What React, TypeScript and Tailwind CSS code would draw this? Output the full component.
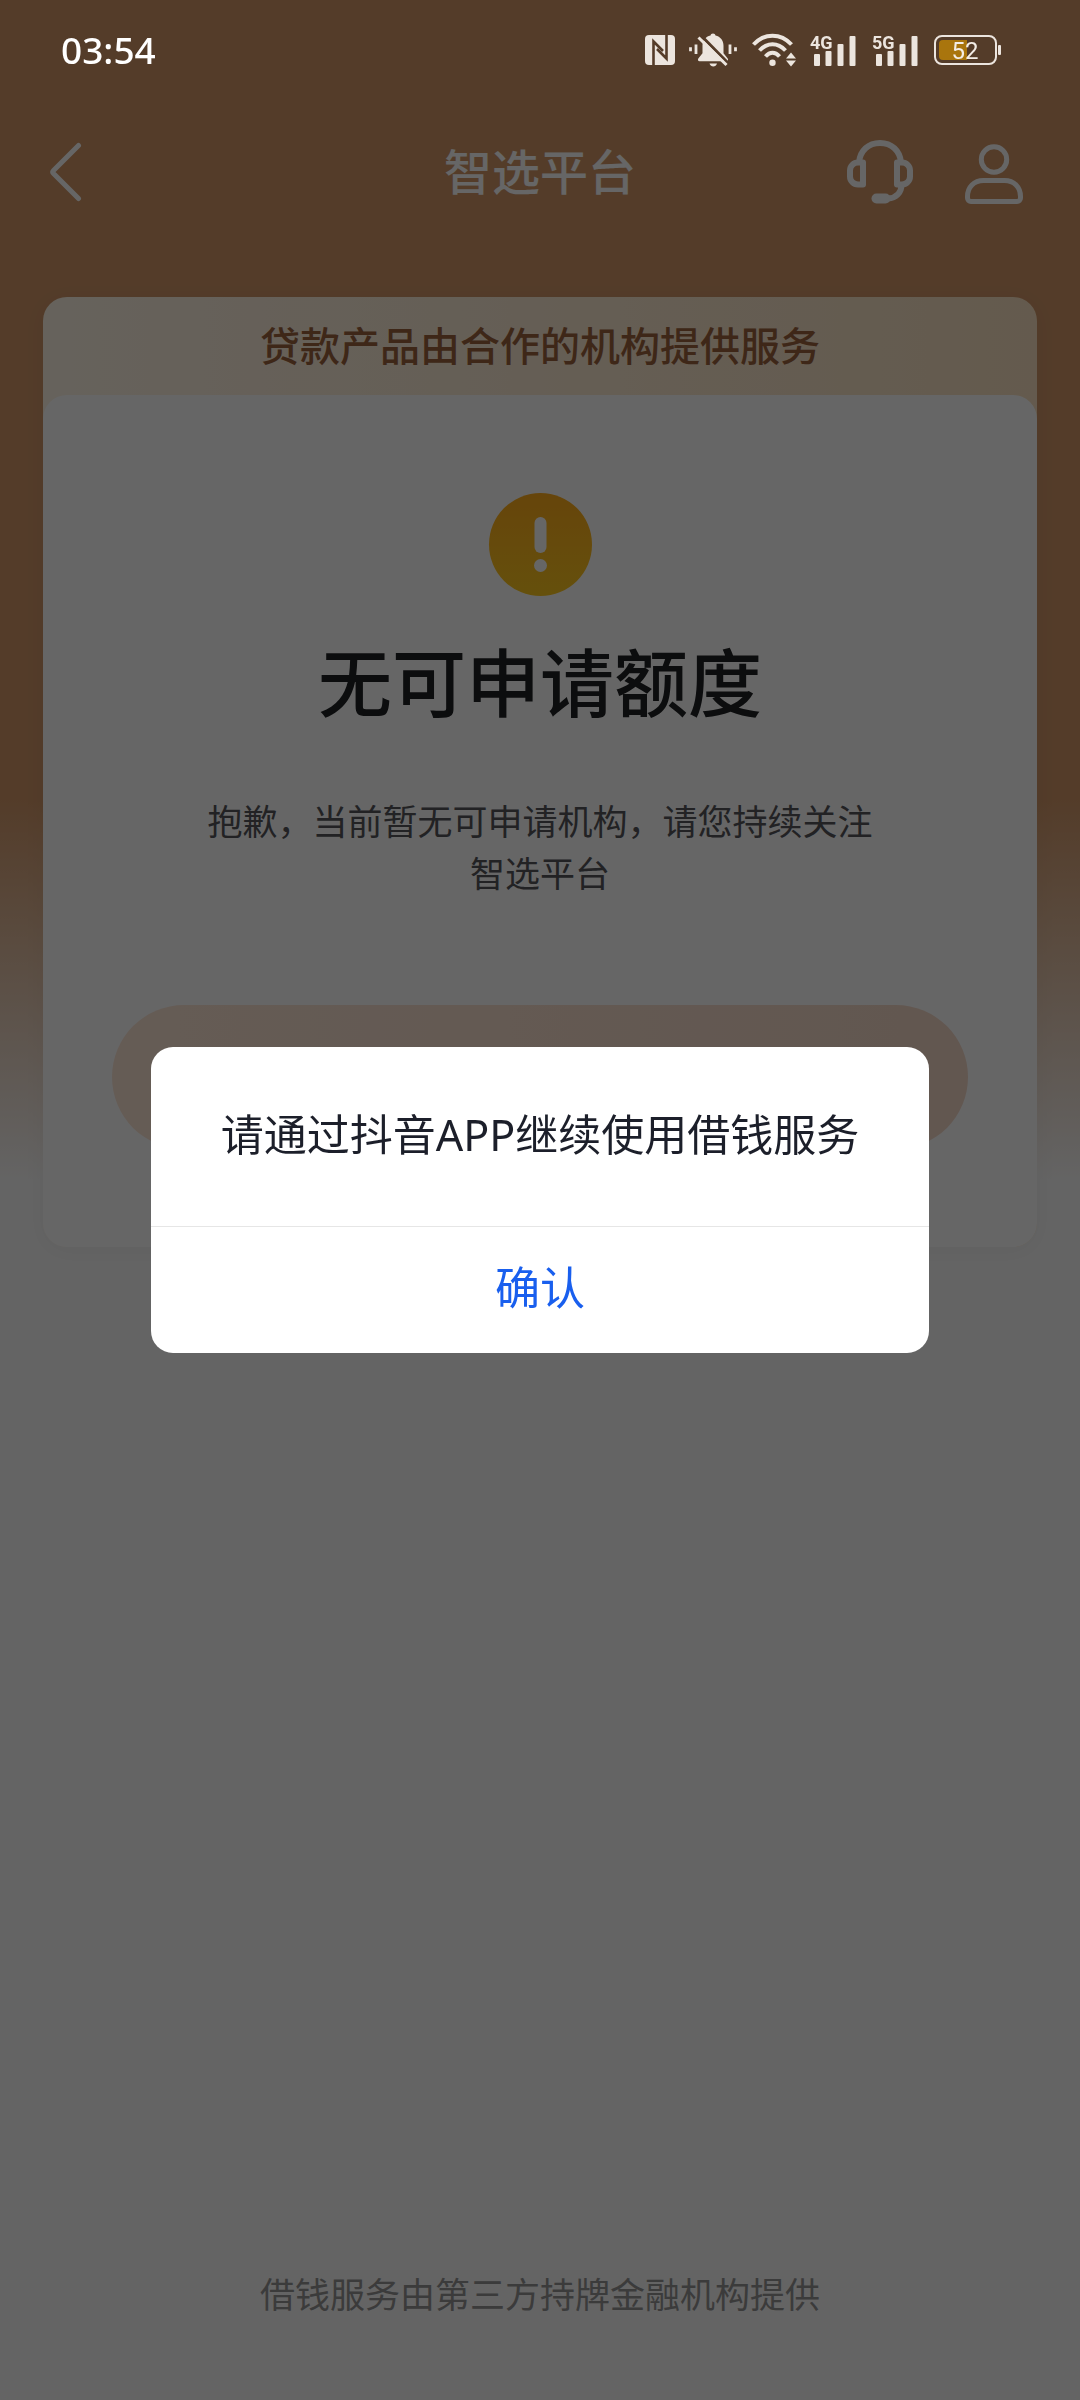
import { useState } from 'react';

function NfcIcon() {
  return (
    <svg width="30" height="30" viewBox="0 0 30 30" fill="none">
      <rect width="30" height="30" rx="4" fill="#ece5de" />
      <g stroke="#543b28" strokeWidth="2.6">
        <path d="M8.5 30V6.500L18 16" />
        <path d="M21.500 0V23.500L12 14" />
      </g>
    </svg>
  );
}

function MuteIcon() {
  return (
    <svg width="49" height="34" viewBox="0 0 49 34" fill="none">
      <path
        d="M24 0.5c1.4 0 2.3.8 2.5 2 5 1.2 8 5 8 10.2v7.6l4.2 5.2c.8 1.2.3 2.8-1.2 2.8H10.5c-1.5 0-2-1.6-1.2-2.8l4.2-5.2v-7.6c0-5.2 3-9 8-10.2.2-1.2 1.1-2 2.5-2z"
        fill="#ece5de"
      />
      <path d="M20.5 30.5h7.5c-.6 1.9-2 3-3.7 3s-3.2-1.1-3.8-3z" fill="#ece5de" />
      <path d="M12 2.5L40 31" stroke="#543b28" strokeWidth="3" />
      <path d="M9.5 4.5L37.5 32" stroke="#ece5de" strokeWidth="3" />
      <path
        d="M1.5 14.200v4M7 11.500v9.500M41 11.500v9.500M46.500 14.200v4"
        stroke="#ece5de"
        strokeWidth="2.8"
      />
    </svg>
  );
}

function WifiIcon() {
  return (
    <svg width="44" height="34" viewBox="0 0 44 34" fill="none">
      <g stroke="#ece5de" strokeWidth="4">
        <path d="M1.5 11.5C7 5.5 13.5 2.700 20.500 2.700S34 5.500 39.500 11.500" />
        <path d="M7.5 17.5C11.5 13.200 15.700 11.300 20.500 11.300S29.500 13.200 33.500 17.500" />
        <path d="M13.5 23.5C15.700 21 18 19.800 20.500 19.800S25.300 21 27.500 23.500" />
      </g>
      <circle cx="20.5" cy="29.8" r="3.2" fill="#ece5de" />
      <path d="M39 19.5l5 6H34zM39 33.5l5-6H34z" fill="#ece5de" />
    </svg>
  );
}

function SignalIcon({ label }: { label: string }) {
  return (
    <svg width="48" height="34" viewBox="0 0 48 34" fill="#ece5de">
      <text
        x="0"
        y="16"
        fontSize="18"
        fontWeight="700"
        fontFamily="Roboto, sans-serif"
      >
        {label}
      </text>
      <rect x="4" y="21" width="6" height="12" rx="1" />
      <rect x="15.5" y="18" width="6" height="15" rx="1" />
      <rect x="27.5" y="11" width="6" height="22" rx="1" />
      <rect x="39.5" y="3" width="6" height="30" rx="1" />
    </svg>
  );
}

function BatteryIcon() {
  return (
    <svg width="67" height="32" viewBox="0 0 67 32" fill="none">
      <rect x="1" y="2" width="61" height="28" rx="7" stroke="#ece5de" strokeWidth="2" />
      <path d="M9 6h24v20H9a4 4 0 0 1-4-4V10a4 4 0 0 1 4-4z" fill="#a9750d" />
      <rect x="64" y="11" width="3" height="10" rx="1" fill="#ece5de" />
      <text
        x="31"
        y="25"
        textAnchor="middle"
        fontSize="24"
        fontFamily="Roboto, sans-serif"
        fill="#f3ede6"
      >
        52
      </text>
    </svg>
  );
}

function BackIcon() {
  return (
    <svg width="34" height="60" viewBox="0 0 34 60" fill="none">
      <path
        d="M29.5 3.5L4.5 28.5q-1.5 1.5 0 3L29.5 56.5"
        stroke="#fff"
        strokeWidth="5"
        strokeLinecap="round"
      />
    </svg>
  );
}

function HeadsetIcon() {
  return (
    <svg width="66" height="64" viewBox="0 0 66 64" fill="none" stroke="#fff" strokeWidth="6">
      <path d="M12 22.5C13 10.500 21.500 3 33 3s20 7.500 21 19.500" />
      <path
        d="M16 22.5H11a8 8 0 0 0-8 8v6a8 8 0 0 0 8 8h5zM50 22.5H55a8 8 0 0 1 8 8v6a8 8 0 0 1-8 8h-5z"
        strokeLinejoin="round"
      />
      <path d="M54.5 44.5C54.500 53 49 58 41 58.500" />
      <path d="M29.5 58.5h9" strokeWidth="10" strokeLinecap="round" />
    </svg>
  );
}

function UserIcon() {
  return (
    <svg width="58" height="66" viewBox="0 -5 58 66" fill="none" stroke="#fff" strokeWidth="5">
      <circle cx="29" cy="15.5" r="12.7" />
      <path d="M18.5 36.5h21C49 36.500 55.500 43 55.500 52.500v1.500a3.500 3.500 0 0 1-3.500 3.500H6A3.500 3.500 0 0 1 2.500 54v-1.500C2.500 43 9 36.500 18.500 36.500z" />
    </svg>
  );
}

function AlertIcon() {
  return (
    <svg width="104" height="104" viewBox="0 0 104 104">
      <defs>
        <linearGradient id="alert" x1="0" y1="0" x2="0" y2="1">
          <stop offset="0" stopColor="#ffac1c" />
          <stop offset="1" stopColor="#fdc820" />
        </linearGradient>
      </defs>
      <circle cx="52.5" cy="51.5" r="51.5" fill="url(#alert)" />
      <rect x="46.5" y="24" width="12" height="36" rx="6" fill="#fff" />
      <circle cx="52.5" cy="72.5" r="6.5" fill="#fff" />
    </svg>
  );
}

function StatusBar() {
  return (
    <div className="relative z-50 flex h-[100px] items-center justify-between pr-[79px] pl-[61px]">
      <span className="text-[37px] font-medium text-white">03:54</span>
      <div className="flex items-center gap-[14px]">
        <NfcIcon />
        <MuteIcon />
        <WifiIcon />
        <SignalIcon label="4G" />
        <SignalIcon label="5G" />
        <BatteryIcon />
      </div>
    </div>
  );
}

function Header() {
  return (
    <header className="grid h-[144px] grid-cols-[1fr_auto_1fr] items-center px-[49px]">
      <button aria-label="返回" className="justify-self-start">
        <BackIcon />
      </button>
      <h1 className="text-[48px] leading-[70px] font-medium text-white">智选平台</h1>
      <div className="flex items-center gap-[52px] justify-self-end pr-2">
        <button aria-label="客服">
          <HeadsetIcon />
        </button>
        <button aria-label="我的">
          <UserIcon />
        </button>
      </div>
    </header>
  );
}

function ConfirmDialog({ onConfirm }: { onConfirm: () => void }) {
  return (
    <div className="fixed inset-0 z-40 flex items-center justify-center bg-black/60">
      <div
        role="dialog"
        aria-modal="true"
        aria-labelledby="dialog-message"
        className="w-[72%] overflow-hidden rounded-[22px] bg-white text-center"
      >
        <p
          id="dialog-message"
          className="border-b border-[#e6e6e6] pt-[57px] pb-[60px] text-[43px] leading-[62px] text-[#1c1f2a]"
        >
          请通过抖音APP继续使用借钱服务
        </p>
        <button
          onClick={onConfirm}
          className="w-full pt-[30px] pb-[34px] text-[45px] leading-[62px] text-[#195fee]"
        >
          确认
        </button>
      </div>
    </div>
  );
}

function App() {
  const [isOpen, setIsOpen] = useState(true);

  return (
    <div
      lang="zh-CN"
      className="flex min-h-screen flex-col bg-[#fafafa] bg-[linear-gradient(180deg,#d19768_0px,#d19768_800px,#fafafa_1180px)] font-['Noto_Sans','Noto_Sans_CJK_SC',sans-serif]"
    >
      <StatusBar />
      <Header />

      <main className="flex flex-1 flex-col px-[43px] pt-[53px]">
        <section className="rounded-[24px] bg-linear-to-r from-[#fff5e6] to-[#fae2c2] shadow-[0_4px_24px_rgba(0,60,60,0.04)]">
          <p className="py-[19px] text-center text-[40px] leading-[60px] font-medium text-[#9c633c]">
            贷款产品由合作的机构提供服务
          </p>
          <div className="flex flex-col items-center rounded-[24px] bg-white px-[69px] pt-[98px] pb-[98px] text-center">
            <AlertIcon />
            <h2 className="mt-[42px] text-[74px] leading-[88px] font-medium text-[#202224]">
              无可申请额度
            </h2>
            <p className="mt-[69px] text-[35px] leading-[52px] text-[#55565a]">
              抱歉，当前暂无可申请机构，请您持续关注
              <br />
              智选平台
            </p>
            <button
              aria-label="返回首页"
              className="mt-[105px] h-[144px] w-full rounded-full bg-linear-to-r from-[#fde6d5] to-[#f5d9c8]"
            />
          </div>
        </section>
      </main>

      <footer className="pb-[79px] text-center text-[35px] leading-[52px] text-[#949494]">
        借钱服务由第三方持牌金融机构提供
      </footer>

      {isOpen && <ConfirmDialog onConfirm={() => setIsOpen(false)} />}
    </div>
  );
}

export default App;
